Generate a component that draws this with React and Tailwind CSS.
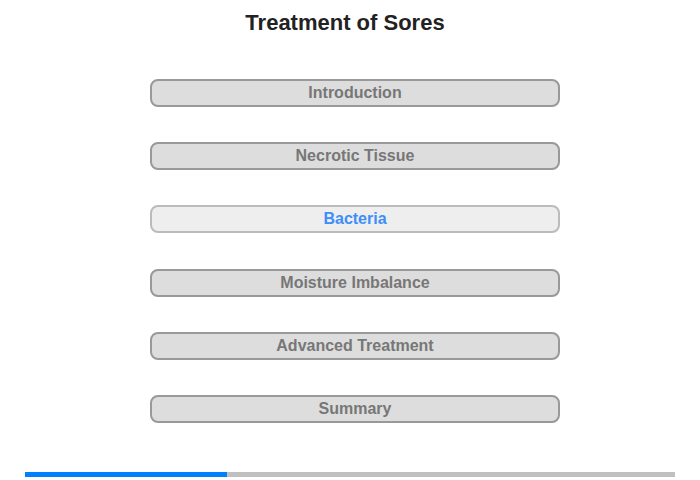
export default function App() {
  const items = ["Introduction", "Necrotic Tissue", "Bacteria", "Moisture Imbalance", "Advanced Treatment", "Summary"];
  return (
    <div className="w-[700px] h-[480px] bg-white flex flex-col items-center" style={{ fontFamily: '"Liberation Sans", Arial, sans-serif' }}>
      <h1 className="mt-[10px] mr-[10px] h-[26px] leading-[26px] text-[22px] font-bold text-[#222]">Treatment of Sores</h1>
      <div className="mt-[43px] ml-[10px] flex flex-col gap-[35.2px]">
        {items.map((t) => {
          const active = t === "Bacteria";
          return (
            <div
              key={t}
              className={
                active
                  ? "w-[410px] h-[28px] rounded-[8px] border-2 border-[#bbbbbb] bg-[#eeeeee] text-[#3d8ef8] text-[16px] font-bold flex items-center justify-center"
                  : "w-[410px] h-[28px] rounded-[8px] border-2 border-[#999999] bg-[#dddddd] text-[#777777] text-[16px] font-bold flex items-center justify-center"
              }
            >
              {t}
            </div>
          );
        })}
      </div>
      <div className="mt-[49px] w-[650px] h-[5px] bg-[#c0c0c0] flex">
        <div className="w-[202px] h-full bg-[#0080ff]" />
      </div>
    </div>
  );
}
